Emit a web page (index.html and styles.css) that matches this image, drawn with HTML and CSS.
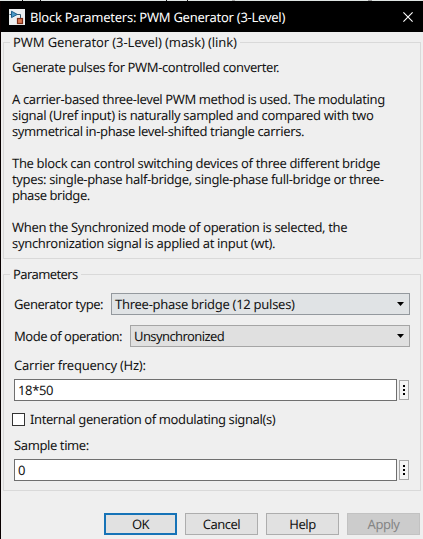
FILE: index.html
```html
<!DOCTYPE html>
<html lang="en">
<head>
<meta charset="utf-8">
<title>Block Parameters: PWM Generator (3-Level)</title>
<link rel="stylesheet" href="styles.css">
</head>
<body>
<div class="backdrop"></div>
<main class="dialog">
  <header class="titlebar">
    <svg class="logo" width="16" height="16" viewBox="0 0 16 16">
      <rect width="16" height="16" fill="#eceff0"/>
      <path d="M.5 5.5H3M8 5.5h3.5V9" fill="none" stroke="#34576c"/>
      <path d="M2.5 2.2v6.4L8.3 5.4z" fill="#4b9ac6" stroke="#1c5f8c"/>
      <rect x="8.5" y="9.5" width="5" height="5" fill="#d9764f" stroke="#7d3019" stroke-width="1.2"/>
    </svg>
    <h1 class="title">Block Parameters: PWM Generator (3-Level)</h1>
    <svg class="close" width="10" height="10" viewBox="0 0 10 10"><path d="M.4.4l9.2 9.2M9.6.4L.4 9.6" stroke="#fff" stroke-width="1.1"/></svg>
  </header>
  <section class="group about">
    <h2 class="legend"><span class="l0">PWM Generator (3-Level) (mask) (link)</span></h2>
    <div class="text">
      <p><span class="l1">Generate pulses for PWM-controlled converter.</span></p>
      <p><span class="l2">A carrier-based three-level PWM method is used. The modulating</span><br><span class="l3">signal (Uref input) is naturally sampled and compared with two</span><br><span class="l4">symmetrical in-phase level-shifted triangle carriers.</span></p>
      <p><span class="l5">The block can control switching devices of three different bridge</span><br><span class="l6">types: single-phase half-bridge, single-phase full-bridge or three-</span><br><span class="l7">phase bridge.</span></p>
      <p><span class="l8">When the Synchronized mode of operation is selected, the</span><br><span class="l9">synchronization signal is applied at input (wt).</span></p>
    </div>
  </section>
  <section class="group params">
    <h2 class="legend"><span class="l10">Parameters</span></h2>
    <div class="row"><span class="label gen"><span class="l11">Generator type:</span></span><div class="combo active"><span class="l12">Three-phase bridge (12 pulses)</span><svg class="arrow" width="7" height="4"><path d="M0 0h7L3.5 4z"/></svg></div></div>
    <div class="row"><span class="label mode"><span class="l13">Mode of operation:</span></span><div class="combo"><span class="l14">Unsynchronized</span><svg class="arrow" width="7" height="4"><path d="M0 0h7L3.5 4z"/></svg></div></div>
    <div class="caption"><span class="l15">Carrier frequency (Hz):</span></div>
    <div class="entry"><div class="field"><span class="l16">18*50</span></div><div class="more"><i></i><i></i><i></i></div></div>
    <div class="check"><span class="box"></span><span class="l17">Internal generation of modulating signal(s)</span></div>
    <div class="caption"><span class="l18">Sample time:</span></div>
    <div class="entry"><div class="field">0</div><div class="more"><i></i><i></i><i></i></div></div>
  </section>
  <footer class="buttons">
    <div class="btn primary"><span class="l22">OK</span></div>
    <div class="btn"><span class="l19">Cancel</span></div>
    <div class="btn"><span class="l20">Help</span></div>
    <div class="btn disabled"><span class="l21">Apply</span></div>
  </footer>
</main>
</body>
</html>
```
FILE: styles.css
```css
* { box-sizing: border-box; }
body { margin: 0; width: 423px; height: 539px; overflow: hidden; background: #efefef; font: 13px/16px "Noto Sans", sans-serif; color: #141414; white-space: nowrap; text-rendering: geometricPrecision; }
h1, h2, p { margin: 0; font-size: 13px; font-weight: 400; }
.backdrop { height: 1px; background: linear-gradient(90deg, #dfe5e3 22px, #111 22px 23px, #dfe5e3 23px 40px, #111 40px 41px, #dfe5e3 41px 166px, #111 166px 167px, #dfe5e3 167px 187px, #111 187px 188px, #dfe5e3 188px 232px, #aaa 232px 235px, #dfe5e3 235px 368px, #999 368px 372px, #dfe5e3 372px); }
.dialog { height: 538px; border-left: 1px solid #080000; background: #efefef; }
.titlebar { height: 31px; background: #000; color: #fff; display: flex; align-items: center; padding: 0 10px 0 8px; }
.title { margin-left: 5px; flex: 1; letter-spacing: -.25px; }
.group { position: relative; margin: 10px 2px 0; border: 1px solid #d9d9d9; height: 217px; }
.params { margin-top: 15px; }
.legend { position: absolute; left: 6px; top: -9px; background: #efefef; padding: 0 3px; }
.text { padding: 16px 0 0 8px; }
.text p { margin-bottom: 16px; }
.row { display: flex; height: 22px; margin: 0 10px 10px 10px; align-items: center; }
.legend + .row { margin-top: 18px; }
.label { flex: none; }
.gen { width: 97px; }
.mode { width: 116px; }
.combo { flex: 1; height: 22px; border: 1px solid #a5a5a5; background: #e0e0e0; display: flex; justify-content: space-between; align-items: center; padding: 0 5px 0 3px; }
.active { background: #e0e3e5; border-color: #94999e; }
.caption { margin: 0 0 6px 10px; }
.entry { display: flex; align-items: center; margin: 0 11px 0 10px; gap: 2px; }
.field { flex: 1; height: 22px; border: 1px solid #6f6f6f; background: #fff; padding: 2px 3px; }
.more { width: 10px; height: 20px; border: 1px solid #a8a8a8; background: #f4f4f4; display: flex; flex-direction: column; justify-content: center; align-items: center; gap: 2px; }
.more i { width: 2px; height: 2px; background: #000; }
.check { display: flex; align-items: center; height: 16px; margin: 10px 0 10px 8px; gap: 5px; }
.box { width: 13px; height: 13px; border: 1px solid #333; background: #fff; }
.buttons { display: flex; justify-content: flex-end; gap: 8px; margin: 22px 3px 0 0; }
.btn { width: 73px; height: 22px; border: 1px solid #adadad; background: #e1e1e1; text-align: center; line-height: 20px; }
.primary { border: 2px solid #1673b7; line-height: 18px; }
.disabled { background: #cccccc; border-color: #c2c2c2; color: #858585; }
.l0 { letter-spacing: -.12px; }
.l1 { letter-spacing: -.4px; }
.l2 { letter-spacing: -.39px; }
.l3 { letter-spacing: -.35px; }
.l4 { letter-spacing: -.38px; }
.l5 { letter-spacing: -.35px; }
.l6 { letter-spacing: -.36px; }
.l7 { letter-spacing: -.46px; }
.l8 { letter-spacing: -.36px; }
.l9 { letter-spacing: -.32px; }
.l10 { letter-spacing: -.6px; }
.l11 { letter-spacing: -.46px; }
.l12 { letter-spacing: -.28px; }
.l13 { letter-spacing: -.5px; }
.l14 { letter-spacing: -.6px; }
.l15 { letter-spacing: -.24px; }
.l16 { letter-spacing: -.35px; }
.l17 { letter-spacing: -.4px; }
.l18 { letter-spacing: -.4px; }
.l19, .l20, .l21, .l22 { letter-spacing: -.5px; }
```
